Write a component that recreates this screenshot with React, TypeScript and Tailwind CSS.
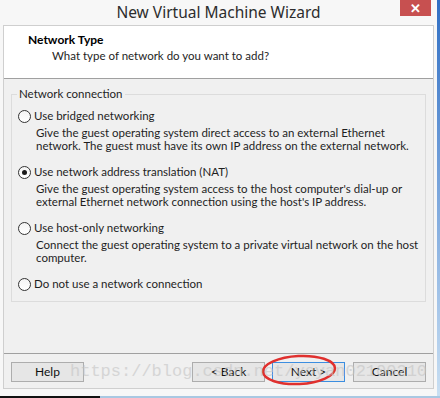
import React from 'react';

const ui = { fontFamily: 'Lato, "Noto Sans", sans-serif' };

function Radio({ checked }: { checked?: boolean }) {
  return (
    <span className="flex h-[13px] w-[13px] shrink-0 items-center justify-center rounded-full border border-[#333] bg-gradient-to-b from-[#f4f4f4] to-white">
      {checked && <span className="h-[5px] w-[5px] rounded-full bg-[#1a1a1a]" />}
    </span>
  );
}

function Option({
  label,
  desc,
  checked,
}: {
  label: string;
  desc?: string[];
  checked?: boolean;
}) {
  return (
    <div className="flex flex-col">
      <div className="flex h-[16px] items-center gap-[3px] pl-[6px]">
        <Radio checked={checked} />
        <span className="whitespace-nowrap leading-[16px]">{label}</span>
      </div>
      {desc && (
        <div className="mt-[2px] whitespace-nowrap pl-[24px] leading-[13px]">
          {desc.map((d) => (
            <div key={d}>{d}</div>
          ))}
        </div>
      )}
    </div>
  );
}

function Button({ label, primary }: { label: string; primary?: boolean }) {
  return (
    <button
      className={`h-[20px] w-[73px] border bg-[#e6e6e6] text-[12px] leading-[18px] text-[#111] ${
        primary ? 'border-[#3c8ee0]' : 'border-[#adadad]'
      }`}
    >
      {label}
    </button>
  );
}

export default function App() {
  return (
    <div className="relative flex h-[398px] w-[440px] flex-col overflow-hidden bg-white text-[11.5px] text-[#1e1e1e]" style={ui}>
      <div className="flex h-[396px]">
        <div className="flex w-[437px] flex-col bg-[#f7f7f7] px-[3px]">
          {/* title bar */}
          <div className="grid h-[25px] grid-cols-[1fr_auto_1fr]">
            <div />
            <div
              className="whitespace-nowrap pt-[1px] text-[15.5px] leading-[22px] text-[#2d2d2d]"
              style={{ fontFamily: '"Noto Sans", sans-serif' }}
            >
              New Virtual Machine Wizard
            </div>
            <div className="flex justify-end pr-[3px]">
              <div className="flex h-[16px] w-[31px] items-center justify-center bg-[#c75050] text-[13px] font-bold leading-none text-white">
                ✕
              </div>
            </div>
          </div>

          {/* content */}
          <div className="flex flex-col border border-[#cfcfcf]">
            <div className="h-[53px] border-b border-[#a0a0a0] bg-white pl-[24px] pt-[6px]">
              <div className="text-[12px] font-bold leading-[16px] text-black">Network Type</div>
              <div className="pl-[24px] leading-[16px]">What type of network do you want to add?</div>
            </div>

            <div className="flex h-[309px] flex-col bg-[#f0f0f0]">
              <fieldset className="mx-[7px] mt-[7px] border border-[#dcdcdc] pb-[9px]">
                <legend className="ml-[5px] px-[2px] leading-[16px]">Network connection</legend>
                <div className="flex flex-col gap-[12px] pt-[6px]">
                  <Option
                    label="Use bridged networking"
                    desc={[
                      'Give the guest operating system direct access to an external Ethernet',
                      'network. The guest must have its own IP address on the external network.',
                    ]}
                  />
                  <Option
                    checked
                    label="Use network address translation (NAT)"
                    desc={[
                      "Give the guest operating system access to the host computer's dial-up or",
                      "external Ethernet network connection using the host's IP address.",
                    ]}
                  />
                  <Option
                    label="Use host-only networking"
                    desc={[
                      'Connect the guest operating system to a private virtual network on the host',
                      'computer.',
                    ]}
                  />
                  <Option label="Do not use a network connection" />
                </div>
              </fieldset>

              <div className="flex-1" />

              <div className="flex border-t border-[#a0a0a0] px-[7px] pb-[6px] pt-[8px]">
                <Button label="Help" />
                <div className="flex-1" />
                <div className="flex gap-[7px]">
                  <Button label="< Back" />
                  <Button label="Next >" primary />
                </div>
                <div className="ml-[8px]">
                  <Button label="Cancel" />
                </div>
              </div>
            </div>
          </div>
        </div>
        <div className="w-[3px] bg-gradient-to-b from-[#2f6fc4] to-[#c9dff2]" />
      </div>
      <div className="flex h-[2px]">
        <div className="w-[100px] bg-[#111]" />
        <div className="flex-1 bg-[#a9c8e2]" />
      </div>

      {/* annotation overlays */}
      <svg className="pointer-events-none absolute left-0 top-0" width="440" height="398">
        <ellipse cx="299" cy="370" rx="36" ry="14" fill="none" stroke="#e0302e" strokeWidth="2.5" transform="rotate(-3 299 370)" />
      </svg>
      <div
        className="pointer-events-none absolute left-[70px] top-[362px] whitespace-nowrap text-[17px] leading-[20px] text-[#c4c4c4] opacity-60"
        style={{ fontFamily: '"Liberation Mono", monospace' }}
      >
        https://blog.csdn.net/yoyan02100210
      </div>
    </div>
  );
}
